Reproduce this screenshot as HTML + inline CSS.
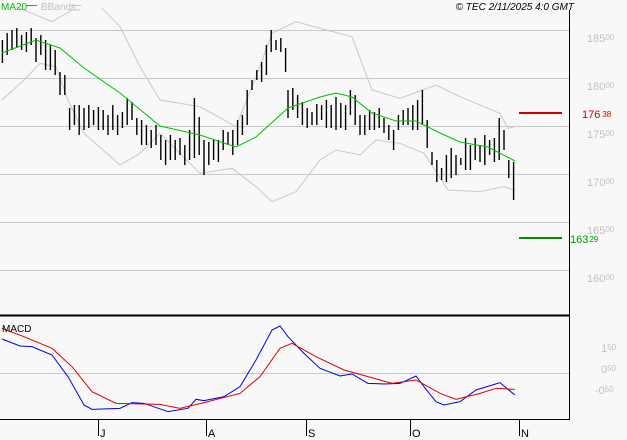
<!DOCTYPE html>
<html><head><meta charset="utf-8"><style>
html,body{margin:0;padding:0;background:#f8f8f8;width:627px;height:440px;overflow:hidden}
svg{display:block}
text{font-family:"Liberation Sans",sans-serif}
</style></head><body>
<svg width="627" height="440" viewBox="0 0 627 440" xmlns="http://www.w3.org/2000/svg">
<rect width="627" height="440" fill="#f8f8f8"/>
<g stroke="#c8c8c8" stroke-width="1">
<line x1="0" y1="30.5" x2="569" y2="30.5"/><line x1="0" y1="78.5" x2="569" y2="78.5"/>
<line x1="0" y1="126.5" x2="569" y2="126.5"/><line x1="0" y1="174.5" x2="569" y2="174.5"/>
<line x1="0" y1="222.5" x2="569" y2="222.5"/><line x1="0" y1="270.5" x2="569" y2="270.5"/>
<line x1="0" y1="373.5" x2="569" y2="373.5"/>
</g>
<!-- bands -->
<g transform="scale(0.4,0.33333)" fill="none" stroke="#c8c8c8" stroke-width="1">
<path vector-effect="non-scaling-stroke" d="M40 20 L130 65 L180 30 L200 30"/>
<path vector-effect="non-scaling-stroke" d="M255 25 L300 80 L350 200 L400 300 L500 320 L590 380 L640 230 L680 100 L740 65 L800 85 L880 110 L930 270 L1000 295 L1090 255 L1150 290 L1250 340 L1270 385 L1287 380"/>
<path vector-effect="non-scaling-stroke" d="M5 300 L60 240 L100 190 L140 200 L170 300 L210 400 L300 495 L350 460 L400 400 L500 520 L580 505 L640 560 L680 605 L740 575 L800 480 L840 450 L900 465 L940 420 L1000 430 L1060 460 L1120 570 L1200 575 L1260 560 L1287 570"/>
</g>
<!-- bars -->
<g transform="scale(1.2,1)" stroke="#000" stroke-width="1.4" fill="none">
<path vector-effect="non-scaling-stroke" d="M2 40V63M6 33V55M10 30V50M14 28V48M18 35V50M22 32V52M26 28V45M30 38V62M34 35V55M38 40V70M42 45V70M46 50V75M50 72V95M54 75V95M58 108V130M62 105V125M66 105V135M70 108V130M74 105V128M78 110V125M82 107V130M86 110V130M90 115V135M94 105V130M98 115V135M102 112V128M106 98V125M110 102V120M114 118V135M118 120V145M122 125V145M126 130V148M130 125V145M134 135V160M138 140V165M142 135V160M146 140V160M150 138V155M154 145V165M158 130V160M162 98V158M166 117V155M170 140V175M174 142V165M178 140V160M182 140V162M186 130V150M190 132V145M194 130V155M198 120V145M202 115V135M206 90V125M210 80V90M214 70V80M218 62V82M222 45V75M226 30V52M230 40V50M234 38V52M238 48V72M240 90V118M244 88V110M248 95V118M252 102V125M256 108V128M260 112V125M264 104V125M268 105V120M272 100V128M276 105V128M280 97V130M284 103V128M288 105V130M292 90V115M296 95V125M300 115V135M304 115V135M308 110V130M312 112V130M316 108V128M320 118V133M324 125V140M328 130V150M332 115V130M336 110V125M340 108V125M344 105V130M348 100V130M352 90V125M356 120V148M360 152V165M364 160V182M368 168V180M372 155V182M376 148V178M380 155V175M384 158V165M388 138V170M392 145V170M396 138V160M400 145V162M404 135V165M408 140V155M412 138V162M416 118V160M420 130V150M424 160V178M428 162V200"/>
</g>
<!-- MA20 -->
<polyline fill="none" stroke="#00c000" stroke-width="1" points="2,53 36,40 60,48 84,68 120,93 160,126 200,135 236,147 256,137 288,108 320,97 336,93 352,97 372,113 396,121 416,121 440,133 460,142 488,147 515,161"/>
<!-- axes -->
<line x1="569.5" y1="10" x2="569.5" y2="420" stroke="#000"/>
<line x1="0" y1="315.5" x2="569" y2="315.5" stroke="#000" stroke-width="2"/>
<line x1="0" y1="419.5" x2="569" y2="419.5" stroke="#000"/>
<g stroke="#000"><line x1="98.5" y1="419" x2="98.5" y2="436"/><line x1="206.5" y1="419" x2="206.5" y2="436"/><line x1="306.5" y1="419" x2="306.5" y2="436"/><line x1="410.5" y1="419" x2="410.5" y2="436"/><line x1="519.5" y1="419" x2="519.5" y2="436"/></g>
<!-- MACD -->
<g transform="translate(0,220) scale(0.4,0.33333)" fill="none" stroke-width="1">
<polyline vector-effect="non-scaling-stroke" stroke="#0000e0" points="5,357 50,378 80,380 130,405 170,470 210,555 230,568 300,565 330,548 360,550 420,575 470,565 490,538 510,542 560,530 600,500 640,420 680,330 700,318 720,350 760,400 800,445 850,468 880,462 920,490 960,492 1000,490 1040,468 1060,500 1090,545 1110,555 1150,545 1190,510 1250,488 1287,525"/>
<polyline vector-effect="non-scaling-stroke" stroke="#e00000" points="5,325 60,350 130,385 180,440 230,515 290,550 400,553 450,565 510,548 600,520 650,470 700,385 730,370 790,410 860,450 920,470 980,490 1040,480 1100,520 1140,538 1200,520 1240,505 1287,508"/>
</g>
<!-- level lines -->
<line x1="519" y1="113" x2="562" y2="113" stroke="#d00000" stroke-width="2"/>
<line x1="519" y1="238" x2="562" y2="238" stroke="#009000" stroke-width="2"/>
<text x="582" y="118" font-size="11" fill="#d00000">176<tspan font-size="8" dx="2" dy="-1">38</tspan></text>
<text x="570" y="243" font-size="11" fill="#009000">163<tspan font-size="8" dx="1" dy="-1">29</tspan></text>
<g font-size="11" fill="#c0c0c0">
<text x="587" y="42">185<tspan font-size="8" dy="-2">00</tspan></text>
<text x="587" y="90">180<tspan font-size="8" dy="-2">00</tspan></text>
<text x="587" y="138">175<tspan font-size="8" dy="-2">00</tspan></text>
<text x="587" y="186">170<tspan font-size="8" dy="-2">00</tspan></text>
<text x="587" y="234">165<tspan font-size="8" dy="-2">00</tspan></text>
<text x="587" y="282">160<tspan font-size="8" dy="-2">00</tspan></text>
<text x="601" y="352">1<tspan font-size="8" dy="-2">50</tspan></text>
<text x="601" y="373">0<tspan font-size="8" dy="-2">50</tspan></text>
<text x="595" y="394">-0<tspan font-size="8" dy="-2">50</tspan></text>
</g>
<g font-size="11" fill="#000">
<text x="100" y="437">J</text><text x="208" y="437">A</text><text x="308" y="437">S</text><text x="412" y="437">O</text><text x="521" y="437">N</text>
<text x="2" y="332" font-size="10">MACD</text>
</g>
<text x="1" y="10" font-size="10" fill="#00c000">MA20</text>
<line x1="26" y1="5.5" x2="37" y2="5.5" stroke="#00c000"/>
<text x="41" y="10" font-size="10" fill="#c0c0c0">BBands</text>
<line x1="71" y1="5.5" x2="81" y2="5.5" stroke="#c0c0c0"/>
<text x="574" y="10" font-size="10" font-style="italic" fill="#000" text-anchor="end">© TEC 2/11/2025 4:0 GMT</text>
</svg>
</body></html>
